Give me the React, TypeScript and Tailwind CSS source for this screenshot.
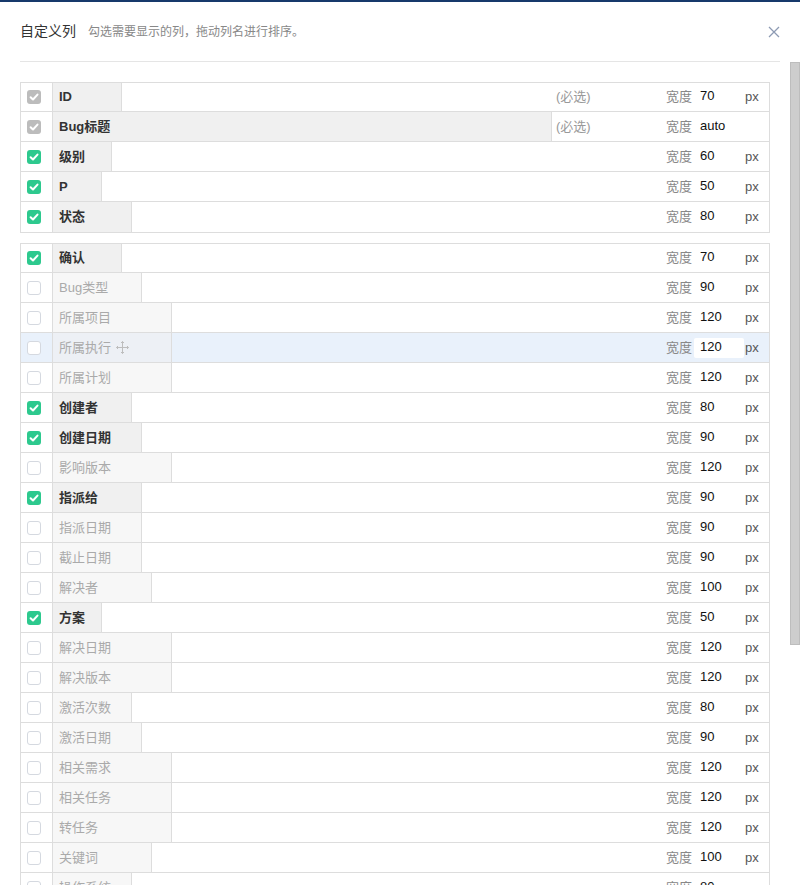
import React from 'react';

type Col = {
  name: string;
  width: number | 'auto';
  checked: boolean;
  required?: boolean;
  active?: boolean;
};

const fixedCols: Col[] = [
  { name: 'ID', width: 70, checked: true, required: true },
  { name: 'Bug标题', width: 'auto', checked: true, required: true },
  { name: '级别', width: 60, checked: true },
  { name: 'P', width: 50, checked: true },
  { name: '状态', width: 80, checked: true },
];

const otherCols: Col[] = [
  { name: '确认', width: 70, checked: true },
  { name: 'Bug类型', width: 90, checked: false },
  { name: '所属项目', width: 120, checked: false },
  { name: '所属执行', width: 120, checked: false, active: true },
  { name: '所属计划', width: 120, checked: false },
  { name: '创建者', width: 80, checked: true },
  { name: '创建日期', width: 90, checked: true },
  { name: '影响版本', width: 120, checked: false },
  { name: '指派给', width: 90, checked: true },
  { name: '指派日期', width: 90, checked: false },
  { name: '截止日期', width: 90, checked: false },
  { name: '解决者', width: 100, checked: false },
  { name: '方案', width: 50, checked: true },
  { name: '解决日期', width: 120, checked: false },
  { name: '解决版本', width: 120, checked: false },
  { name: '激活次数', width: 80, checked: false },
  { name: '激活日期', width: 90, checked: false },
  { name: '相关需求', width: 120, checked: false },
  { name: '相关任务', width: 120, checked: false },
  { name: '转任务', width: 120, checked: false },
  { name: '关键词', width: 100, checked: false },
  { name: '操作系统', width: 80, checked: false },
];

const CheckBox = ({ checked, disabled }: { checked: boolean; disabled?: boolean }) => {
  if (!checked) {
    return <span className="block w-[14px] h-[14px] rounded-[3px] border border-[#d5d9e0] bg-white" />;
  }
  return (
    <span
      className={`flex items-center justify-center w-[14px] h-[14px] rounded-[3px] ${
        disabled ? 'bg-[#bcbcbc]' : 'bg-[#2dc98e]'
      }`}
    >
      <svg width="10" height="10" viewBox="0 0 10 10" fill="none">
        <path d="M1.6 5.2 L4 7.5 L8.5 2.6" stroke="#fff" strokeWidth="2" strokeLinecap="round" strokeLinejoin="round" />
      </svg>
    </span>
  );
};

const MoveIcon = () => (
  <svg width="13" height="13" viewBox="0 0 13 13" fill="none" stroke="#bdbdbd" strokeWidth="1">
    <path d="M6.5 0.5 V12.5 M0.5 6.5 H12.5" />
    <path d="M5 2 L6.5 0.5 L8 2 M5 11 L6.5 12.5 L8 11 M2 5 L0.5 6.5 L2 8 M11 5 L12.5 6.5 L11 8" />
  </svg>
);

const Row = ({ col }: { col: Col }) => {
  const nameBg = col.active ? 'bg-[#edf0f5]' : col.checked ? 'bg-[#f0f0f0]' : 'bg-[#f7f7f7]';
  return (
    <div className={`flex h-[30px] first:h-[29px] shrink-0 items-stretch ${col.active ? 'bg-[#e9f1fb]' : 'bg-white'}`}>
      <div className="w-[32px] shrink-0 border-r border-[#ddd] flex items-center pl-[6px]">
        <CheckBox checked={col.checked} disabled={col.required} />
      </div>
      <div
        className={`shrink-0 border-r border-[#ddd] flex items-center gap-[5px] pl-[6px] text-[13px] ${nameBg} ${
          col.checked ? 'font-bold text-[#333]' : 'text-[#aaa]'
        } ${col.width === 'auto' ? 'flex-1' : ''}`}
        style={col.width === 'auto' ? undefined : { width: col.width - 1 }}
      >
        <span className="whitespace-nowrap">{col.name}</span>
        {col.active && <MoveIcon />}
      </div>
      {col.width !== 'auto' && <div className="flex-1" />}
      <div className="w-[217px] shrink-0 flex items-center text-[13px]">
        <span className="w-[108px] pl-[4px] text-[#999]">{col.required ? '(必选)' : ''}</span>
        <span className="w-[34px] pr-[2px] text-right text-[#888]">宽度</span>
        <span
          className={`w-[50px] h-[20px] px-[6px] leading-[17px] text-[#111] rounded-[2px] ${
            col.active ? 'bg-white' : ''
          }`}
        >
          {col.width}
        </span>
        <span className="w-[25px] pl-[1px] text-[#555]">{col.width === 'auto' ? '' : 'px'}</span>
      </div>
    </div>
  );
};

const Group = ({ cols, className = '' }: { cols: Col[]; className?: string }) => (
  <div className={`flex flex-col shrink-0 border border-[#ddd] divide-y divide-[#ddd] ${className}`}>
    {cols.map((c) => (
      <Row key={c.name} col={c} />
    ))}
  </div>
);

const App: React.FC = () => {
  return (
    <div
      className="w-[800px] h-[885px] bg-white flex flex-col overflow-hidden"
      style={{ fontFamily: '"Liberation Sans", "Noto Sans CJK SC", sans-serif' }}
    >
      <div className="h-[2px] bg-[#17396b] shrink-0" />

      {/* Header */}
      <div className="mx-5 h-[60px] shrink-0 border-b border-[#e5e5e5] flex items-center">
        <span className="text-[14px] text-[#333]">自定义列</span>
        <span className="ml-[12px] text-[12px] text-[#888]">勾选需要显示的列，拖动列名进行排序。</span>
        <button className="ml-auto mr-[-1px] p-[1px]">
          <svg width="12" height="12" viewBox="0 0 12 12" stroke="#8d9bb3" strokeWidth="1.3" fill="none">
            <path d="M1 1 L11 11 M11 1 L1 11" />
          </svg>
        </button>
      </div>

      {/* Column list + scrollbar */}
      <div className="flex-1 flex min-h-0">
        <div className="w-[790px] flex flex-col overflow-hidden pt-5 pl-5 pr-5">
          <Group cols={fixedCols} />
          <Group cols={otherCols} className="mt-[10px]" />
        </div>
        <div className="w-[10px] bg-white">
          <div className="h-[583px] bg-[#cdcdcd] border border-[#bdbdbd]" />
        </div>
      </div>
    </div>
  );
};

export default App;
